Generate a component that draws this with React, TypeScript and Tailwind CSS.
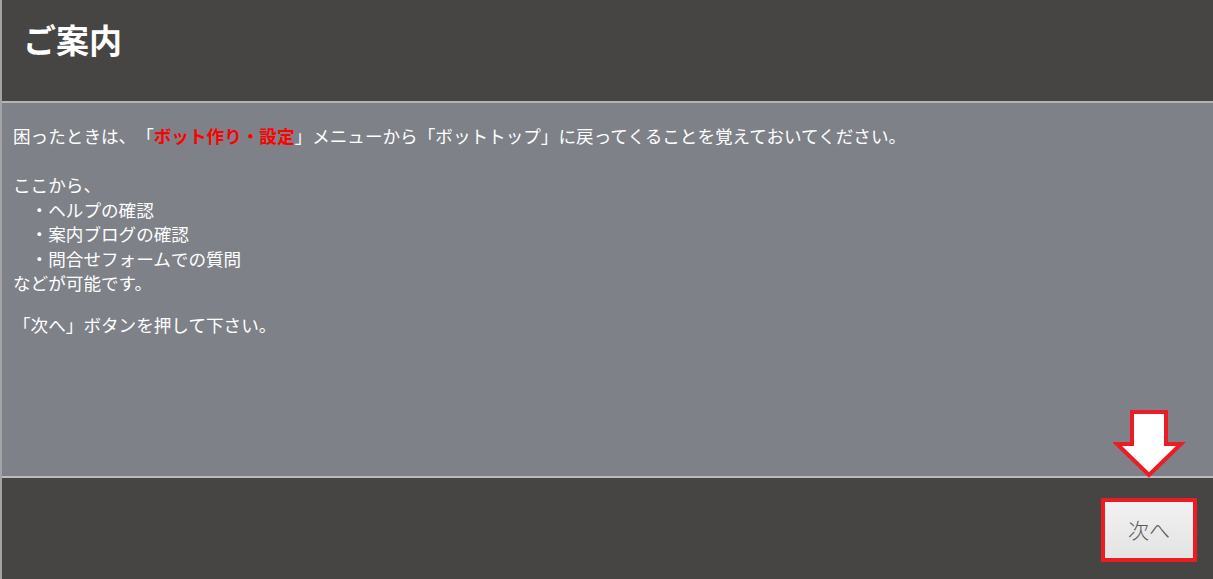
const FONT = { fontFamily: '"Noto Sans CJK JP", "Noto Sans", sans-serif' }
const IDEO_SPACE = '\u3000'

function DownArrow() {
  return (
    <svg
      className="absolute right-[26px] top-[305px]"
      width="74"
      height="72"
      viewBox="0 0 74 72"
    >
      <polygon
        points="19,4 53,4 53,36 68,36 36,67 4,36 19,36"
        fill="#ffffff"
        stroke="#ed1c24"
        strokeWidth="4"
        strokeLinejoin="miter"
      />
    </svg>
  )
}

export default function App() {
  return (
    <div
      className="w-[1213px] h-[579px] flex flex-col border-l-2 border-[#a3a3a3] overflow-hidden [text-spacing-trim:space-all]"
      style={FONT}
    >
      {/* Header */}
      <div className="h-[103px] shrink-0 bg-[#474543] flex items-center pl-[21px] border-b-2 border-[#b4b4b4]">
        <h1 className="text-[33px] font-bold text-white leading-none -mt-[22px]">ご案内</h1>
      </div>

      {/* Body */}
      <div className="relative h-[375px] shrink-0 bg-[#7e8188] border-b-2 border-[#bcbcbc] pl-[11px] pt-[21px] text-white text-[17.6px] leading-[24.5px]">
        <p>
          困ったときは、「<span className="text-[#ff0000] font-bold">ボット作り・設定</span>」メニューから「ボットトップ」に戻ってくることを覚えておいてください。
          <br />
          <br />
          ここから、
          <br />
          {IDEO_SPACE}・ヘルプの確認
          <br />
          {IDEO_SPACE}・案内ブログの確認
          <br />
          {IDEO_SPACE}・問合せフォームでの質問
          <br />
          などが可能です。
        </p>
        <p className="mt-[17px]">「次へ」ボタンを押して下さい。</p>
        <DownArrow />
      </div>

      {/* Footer */}
      <div className="flex-1 bg-[#474543] flex justify-end items-start pt-[20px] pr-[16px]">
        <div className="border-4 border-[#ed1c24]">
          <button
            type="button"
            className="w-[88px] h-[56px] bg-gradient-to-b from-[#f2f2f2] via-[#eaeaea] to-[#e4e4e4] text-[#5a5a5a] text-[21px] font-light flex items-center justify-center"
          >
            次へ
          </button>
        </div>
      </div>
    </div>
  )
}
